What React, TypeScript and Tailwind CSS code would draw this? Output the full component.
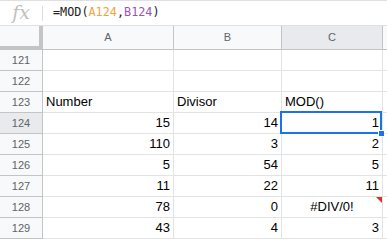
import React from 'react';

type Cell = { v: string; align?: 'left' | 'right' | 'center'; error?: boolean; selected?: boolean };

const rows: { n: number; cells: Cell[] }[] = [
  { n: 121, cells: [{ v: '' }, { v: '' }, { v: '' }] },
  { n: 122, cells: [{ v: '' }, { v: '' }, { v: '' }] },
  { n: 123, cells: [{ v: 'Number' }, { v: 'Divisor' }, { v: 'MOD()' }] },
  { n: 124, cells: [{ v: '15', align: 'right' }, { v: '14', align: 'right' }, { v: '1', align: 'right', selected: true }] },
  { n: 125, cells: [{ v: '110', align: 'right' }, { v: '3', align: 'right' }, { v: '2', align: 'right' }] },
  { n: 126, cells: [{ v: '5', align: 'right' }, { v: '54', align: 'right' }, { v: '5', align: 'right' }] },
  { n: 127, cells: [{ v: '11', align: 'right' }, { v: '22', align: 'right' }, { v: '11', align: 'right' }] },
  { n: 128, cells: [{ v: '78', align: 'right' }, { v: '0', align: 'right' }, { v: '#DIV/0!', align: 'center', error: true }] },
  { n: 129, cells: [{ v: '43', align: 'right' }, { v: '4', align: 'right' }, { v: '3', align: 'right' }] },
];

const widths = ['w-[131px]', 'w-[108px]', 'w-[101px]'];

const App = () => {
  return (
    <div className="w-[387px] h-[240px] overflow-hidden bg-white font-['Liberation_Sans',Arial,sans-serif]">
      {/* Formula bar */}
      <div className="h-[26px] flex items-center border-t border-b border-[#e0e0e0]">
        <div className="w-[42px] flex justify-center">
          <span className="font-['DejaVu_Serif',serif] italic text-[19px] leading-none text-[#c0c0c0] -mt-[2px]">fx</span>
        </div>
        <div className="w-px h-[15px] bg-[#dadce0]" />
        <div className="pl-[10px] font-['DejaVu_Sans_Mono',monospace] text-[11.8px] text-[#222]">
          =MOD(<span className="text-[#f4a23c]">A124</span>,<span className="text-[#9d55b5]">B124</span>)
        </div>
      </div>

      {/* Column headers */}
      <div className="flex h-[24px]">
        <div className="w-[43px] bg-[#f8f9fa] border-r-4 border-b-4 border-[#c4c4c4]" />
        {['A', 'B', 'C'].map((c, i) => (
          <div
            key={c}
            className={`${widths[i]} flex items-center justify-center border-r border-b border-[#c4c4c4] text-[11px] text-[#5f6368] ${c === 'C' ? 'bg-[#e8eaed]' : 'bg-[#f8f9fa]'}`}
          >
            {c}
          </div>
        ))}
        <div className="flex-1 bg-[#f8f9fa] border-b border-[#c4c4c4]" />
      </div>

      {/* Rows */}
      {rows.map((r) => (
        <div key={r.n} className="flex h-[21px]">
          <div
            className={`w-[43px] flex items-center justify-center border-r border-b border-[#c4c4c4] text-[11px] text-[#5f6368] ${r.n === 124 ? 'bg-[#e8eaed]' : 'bg-[#f8f9fa]'}`}
          >
            {r.n}
          </div>
          {r.cells.map((c, i) => (
            <div
              key={i}
              className={`${widths[i]} relative flex items-center px-[3px] border-r border-b border-[#e2e3e3] text-[13px] leading-[20px] text-black ${
                c.align === 'right' ? 'justify-end' : c.align === 'center' ? 'justify-center' : 'justify-start'
              }`}
            >
              {c.v}
              {c.error && (
                <div className="absolute right-0 top-0 w-0 h-0 border-t-[6px] border-l-[6px] border-t-[#d93025] border-l-transparent" />
              )}
              {c.selected && (
                <>
                  <div className="absolute z-10 -left-[2px] -top-[2px] right-[0px] -bottom-[1px] border-2 border-[#1a73e8]" />
                  <div className="absolute z-20 -right-[3px] -bottom-[4px] w-[7px] h-[7px] bg-[#1a73e8] border border-white" />
                </>
              )}
            </div>
          ))}
          <div className="flex-1 border-b border-[#e2e3e3]" />
        </div>
      ))}
    </div>
  );
};

export default App;
